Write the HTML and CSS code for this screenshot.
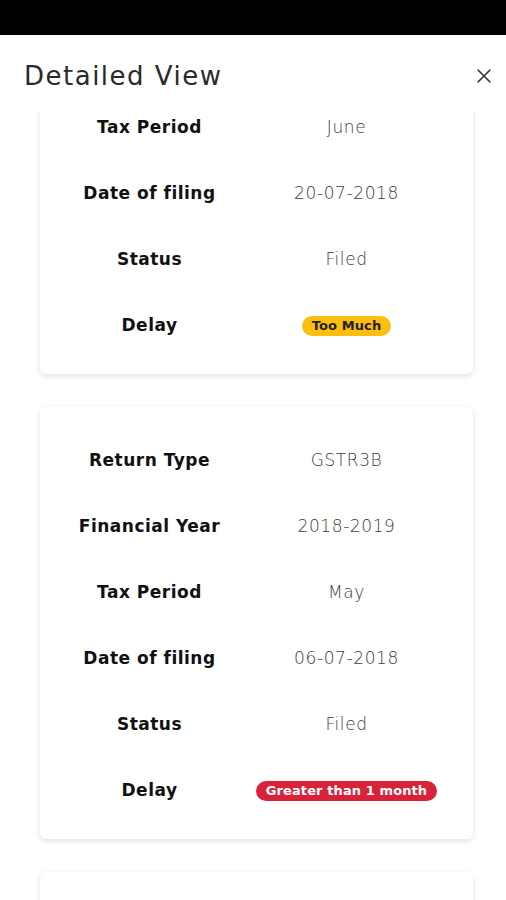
FILE: index.html
```html
<!DOCTYPE html>
<html lang="en">
<head>
    <meta charset="UTF-8">
    <meta name="viewport" content="width=device-width, initial-scale=1.0">
    <title>Detailed View</title>
    <link rel="stylesheet" href="styles.css">
</head>
<body>
    <div class="status-bar"></div>

    <div class="header">
        <h1>Detailed View</h1>
        <button class="close" type="button" aria-label="Close">
            <svg width="16" height="16" viewBox="0 0 16 16">
                <path d="M2 2 L14 14 M14 2 L2 14" stroke="#333" stroke-width="1.6" stroke-linecap="round"/>
            </svg>
        </button>
    </div>

    <div class="viewport">
        <div class="list">
            <!-- Card 1 (its top is scrolled under the header) -->
            <div class="card">
                <div class="row"><span class="label">Tax Period</span><span class="value">June</span></div>
                <div class="row"><span class="label">Date of filing</span><span class="value">20-07-2018</span></div>
                <div class="row"><span class="label">Status</span><span class="value">Filed</span></div>
                <div class="row"><span class="label">Delay</span><span class="value"><span class="badge badge-warn">Too Much</span></span></div>
            </div>

            <!-- Card 2 -->
            <div class="card">
                <div class="row"><span class="label">Return Type</span><span class="value">GSTR3B</span></div>
                <div class="row"><span class="label">Financial Year</span><span class="value">2018-2019</span></div>
                <div class="row"><span class="label">Tax Period</span><span class="value">May</span></div>
                <div class="row"><span class="label">Date of filing</span><span class="value">06-07-2018</span></div>
                <div class="row"><span class="label">Status</span><span class="value">Filed</span></div>
                <div class="row"><span class="label">Delay</span><span class="value"><span class="badge badge-danger">Greater than 1 month</span></span></div>
            </div>

            <!-- Card 3 (starts at the bottom edge) -->
            <div class="card card-next"></div>
        </div>
    </div>
</body>
</html>
```

FILE: styles.css
```css
body {
    font-family: 'DejaVu Sans', sans-serif;
    background-color: #ffffff;
    color: #222;
    margin: 0;
    width: 506px;
    height: 900px;
    overflow: hidden;
}
.status-bar {
    height: 35px;
    background: #000;
}
.header {
    height: 78px;
    box-sizing: border-box;
    display: flex;
    align-items: center;
    justify-content: space-between;
    padding: 3px 14px 0 24px;
    background: #fff;
}
h1 {
    margin: 0;
    font-size: 26px;
    font-weight: normal;
    color: #2a2a2a;
    letter-spacing: 1.5px;
}
.close {
    border: none;
    background: none;
    padding: 0;
    width: 16px;
    height: 16px;
    cursor: pointer;
}
.viewport {
    height: 787px;
    overflow: hidden;
}
.list {
    margin-top: -39px;
    display: flex;
    flex-direction: column;
    gap: 33px;
    padding: 0 33px 0 40px;
}
.card {
    background: #fff;
    border-radius: 6px;
    box-shadow: 0 2px 6px rgba(0, 0, 0, 0.12);
    padding: 20px 29px 16px 11px;
}
.card-next {
    min-height: 120px;
}
.row {
    height: 66px;
    display: grid;
    grid-template-columns: 197px 197px;
    align-items: center;
    text-align: center;
}
.label {
    font-size: 17px;
    font-weight: bold;
    color: #111;
    letter-spacing: 0.5px;
}
.value {
    font-size: 17px;
    font-weight: 300;
    color: #3c3c3c;
    letter-spacing: 0.6px;
}
.badge {
    display: inline-block;
    font-size: 13px;
    font-weight: bold;
    padding: 2px 10px;
    border-radius: 10px;
    line-height: 16px;
    letter-spacing: 0.1px;
}
.badge-warn {
    background: #fdbf0f;
    color: #222;
}
.badge-danger {
    background: #d9213a;
    color: #fff;
}
```
